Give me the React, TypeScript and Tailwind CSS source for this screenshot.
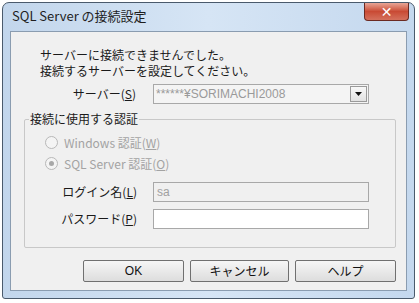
import React from 'react';

const font = { fontFamily: '"Noto Sans CJK JP", "Noto Sans", sans-serif' };

const Radio = ({ checked }: { checked?: boolean }) => (
    <span className="w-[13px] h-[13px] rounded-full border border-[#b8b8b8] bg-[#f4f4f4] flex items-center justify-center">
        {checked && <span className="w-[5px] h-[5px] rounded-full bg-[#a8a8a8]" />}
    </span>
);

const Btn = ({ children, w }: { children: React.ReactNode; w: string }) => (
    <div className={`${w} h-[22px] border border-[#707070] rounded-[2px] bg-gradient-to-b from-[#f6f6f6] to-[#dddddd] flex items-center justify-center text-[12px] text-[#111] leading-none`}>
        {children}
    </div>
);

export default function App() {
    return (
        <div className="w-[419px] h-[303px] bg-white pl-[2px] pt-[2px]" style={font}>
            {/* window frame */}
            <div className="w-[413px] h-[297px] rounded-t-[7px] rounded-b-[3px] border border-[#4a5a6c] bg-gradient-to-r from-[#c2d6ec] via-[#d6e5f5] to-[#c4d8ee] flex flex-col">
                {/* title bar */}
                <div className="h-[28px] flex items-start justify-between">
                    <span className="pl-[9px] pt-[6px] text-[13px] text-[#1e1e1e] leading-none">SQL Server の接続設定</span>
                    <div className="mr-[5px] w-[45px] h-[18px] rounded-b-[4px] border border-[#6b2a22] border-t-0 bg-gradient-to-b from-[#e7a596] via-[#c94a34] to-[#d4705c] flex items-center justify-center">
                        <span className="text-white text-[14px] font-bold leading-none" style={{ fontFamily: '"DejaVu Sans", sans-serif' }}>✕</span>
                    </div>
                </div>

                {/* client area */}
                <div className="mx-[7px] w-[397px] h-[260px] border border-[#8a9cb0] bg-[#f0f0f0] text-[12px] text-[#1a1a1a] leading-none">
                    <div className="pl-[29px] pt-[17px] flex flex-col gap-[4px]">
                        <span>サーバーに接続できませんでした。</span>
                        <span>接続するサーバーを設定してください。</span>
                    </div>

                    {/* server */}
                    <div className="mt-[7px] flex items-center">
                        <span className="w-[125px] text-right">サーバー(<u>S</u>)</span>
                        <div className="ml-[17px] w-[216px] h-[20px] border border-[#a8a8a8] bg-[#f4f4f4] flex items-center justify-between pl-[2px] pr-[1px]">
                            <span className="text-[#9a9a9a]" style={{ fontFamily: '"Liberation Sans", sans-serif' }}>******¥SORIMACHI2008</span>
                            <span className="w-[17px] h-[16px] border border-[#9a9a9a] bg-gradient-to-b from-[#f8f8f8] to-[#e2e2e2] flex items-center justify-center">
                                <svg width="7" height="4" viewBox="0 0 7 4"><path d="M0 0h7L3.5 4z" fill="#111" /></svg>
                            </span>
                        </div>
                    </div>

                    {/* group box */}
                    <div className="relative ml-[13px] mt-[15px] w-[372px] h-[129px] border border-[#c8c8c8] rounded-[2px]">
                        <span className="absolute left-[4px] -top-[7px] bg-[#f0f0f0] px-[1px]">接続に使用する認証</span>
                        <div className="pl-[20px] pt-[16px] flex flex-col gap-[8px] text-[#a3a3a3]">
                            <div className="flex items-center gap-[6px]">
                                <Radio />
                                <span>Windows 認証(<u>W</u>)</span>
                            </div>
                            <div className="flex items-center gap-[6px]">
                                <Radio checked />
                                <span>SQL Server 認証(<u>O</u>)</span>
                            </div>
                        </div>
                        <div className="mt-[12px] flex flex-col gap-[7px]">
                            <div className="flex items-center">
                                <span className="w-[112px] text-right text-[#1a1a1a]">ログイン名(<u>L</u>)</span>
                                <div className="ml-[16px] w-[216px] h-[20px] border border-[#a8a8a8] bg-[#f0f0f0] flex items-center pl-[3px] text-[#a0a0a0]" style={{ fontFamily: '"Liberation Sans", sans-serif' }}>sa</div>
                            </div>
                            <div className="flex items-center">
                                <span className="w-[112px] text-right text-[#1a1a1a]">パスワード(<u>P</u>)</span>
                                <div className="ml-[16px] w-[216px] h-[20px] border border-[#a8a8a8] bg-white" />
                            </div>
                        </div>
                    </div>

                    {/* buttons */}
                    <div className="mt-[12px] ml-[72px] flex gap-[6px]">
                        <Btn w="w-[101px]"><span style={{ fontFamily: '"Liberation Sans", sans-serif' }}>OK</span></Btn>
                        <Btn w="w-[99px]">キャンセル</Btn>
                        <Btn w="w-[101px]">ヘルプ</Btn>
                    </div>
                </div>
            </div>
        </div>
    );
}
